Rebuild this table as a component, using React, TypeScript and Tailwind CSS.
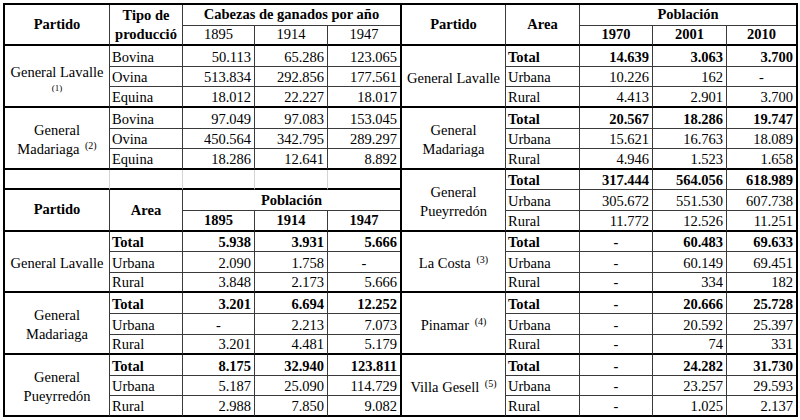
import React from "react";

type Row = { area: string; vals: string[] };
type Group = { name: React.ReactNode; rows: Row[] };

const sup = (n: number) => <sup className="text-[10px] ml-[2px]">({n})</sup>;

const ganado: Group[] = [
    {
        name: (
            <>
                <span>General Lavalle</span>
                <span className="text-[9px] leading-[12px]">(1)</span>
            </>
        ),
        rows: [
            { area: "Bovina", vals: ["50.113", "65.286", "123.065"] },
            { area: "Ovina", vals: ["513.834", "292.856", "177.561"] },
            { area: "Equina", vals: ["18.012", "22.227", "18.017"] },
        ],
    },
    {
        name: (
            <>
                <span>General</span>
                <span>Madariaga {sup(2)}</span>
            </>
        ),
        rows: [
            { area: "Bovina", vals: ["97.049", "97.083", "153.045"] },
            { area: "Ovina", vals: ["450.564", "342.795", "289.297"] },
            { area: "Equina", vals: ["18.286", "12.641", "8.892"] },
        ],
    },
];

const poblacionVieja: Group[] = [
    {
        name: <span>General Lavalle</span>,
        rows: [
            { area: "Total", vals: ["5.938", "3.931", "5.666"] },
            { area: "Urbana", vals: ["2.090", "1.758", "-"] },
            { area: "Rural", vals: ["3.848", "2.173", "5.666"] },
        ],
    },
    {
        name: (
            <>
                <span>General</span>
                <span>Madariaga</span>
            </>
        ),
        rows: [
            { area: "Total", vals: ["3.201", "6.694", "12.252"] },
            { area: "Urbana", vals: ["-", "2.213", "7.073"] },
            { area: "Rural", vals: ["3.201", "4.481", "5.179"] },
        ],
    },
    {
        name: (
            <>
                <span>General</span>
                <span>Pueyrredón</span>
            </>
        ),
        rows: [
            { area: "Total", vals: ["8.175", "32.940", "123.811"] },
            { area: "Urbana", vals: ["5.187", "25.090", "114.729"] },
            { area: "Rural", vals: ["2.988", "7.850", "9.082"] },
        ],
    },
];

const poblacionNueva: Group[] = [
    {
        name: <span>General Lavalle</span>,
        rows: [
            { area: "Total", vals: ["14.639", "3.063", "3.700"] },
            { area: "Urbana", vals: ["10.226", "162", "-"] },
            { area: "Rural", vals: ["4.413", "2.901", "3.700"] },
        ],
    },
    {
        name: (
            <>
                <span>General</span>
                <span>Madariaga</span>
            </>
        ),
        rows: [
            { area: "Total", vals: ["20.567", "18.286", "19.747"] },
            { area: "Urbana", vals: ["15.621", "16.763", "18.089"] },
            { area: "Rural", vals: ["4.946", "1.523", "1.658"] },
        ],
    },
    {
        name: (
            <>
                <span>General</span>
                <span>Pueyrredón</span>
            </>
        ),
        rows: [
            { area: "Total", vals: ["317.444", "564.056", "618.989"] },
            { area: "Urbana", vals: ["305.672", "551.530", "607.738"] },
            { area: "Rural", vals: ["11.772", "12.526", "11.251"] },
        ],
    },
    {
        name: <span>La Costa {sup(3)}</span>,
        rows: [
            { area: "Total", vals: ["-", "60.483", "69.633"] },
            { area: "Urbana", vals: ["-", "60.149", "69.451"] },
            { area: "Rural", vals: ["-", "334", "182"] },
        ],
    },
    {
        name: <span>Pinamar {sup(4)}</span>,
        rows: [
            { area: "Total", vals: ["-", "20.666", "25.728"] },
            { area: "Urbana", vals: ["-", "20.592", "25.397"] },
            { area: "Rural", vals: ["-", "74", "331"] },
        ],
    },
    {
        name: <span>Villa Gesell {sup(5)}</span>,
        rows: [
            { area: "Total", vals: ["-", "24.282", "31.730"] },
            { area: "Urbana", vals: ["-", "23.257", "29.593"] },
            { area: "Rural", vals: ["-", "1.025", "2.137"] },
        ],
    },
];

type CellProps = {
    children?: React.ReactNode;
    className?: string;
    last?: boolean;
    thick?: boolean;
    faint?: boolean;
};

// every cell draws its own right and bottom line; groups end on a heavy line
const Cell: React.FC<CellProps> = ({ children, className = "", last, thick, faint }) => {
    const right = last ? "" : faint ? "border-r border-r-[#d4d4d4]" : "border-r border-r-[#3a3a3a]";
    const bottom = thick ? "border-b-2 border-b-black" : "border-b border-b-[#3a3a3a]";
    return <div className={`flex min-w-0 overflow-hidden whitespace-nowrap ${right} ${bottom} ${className}`}>{children}</div>;
};

const Header: React.FC<{ title: string; second: React.ReactNode; years: string[]; boldYears: boolean }> = ({ title, second, years, boldYears }) => (
    <>
        <Cell thick className="row-span-2 items-center justify-center font-bold">Partido</Cell>
        <Cell thick className="row-span-2 flex-col items-center justify-around font-bold leading-none">{second}</Cell>
        <Cell last className="col-span-3 items-center justify-center font-bold">{title}</Cell>
        {years.map((y, i) => (
            <Cell key={y} thick last={i === 2} className={`items-end justify-center pb-[1px] ${boldYears ? "font-bold" : ""}`}>
                {y}
            </Cell>
        ))}
    </>
);

const Groups: React.FC<{ groups: Group[] }> = ({ groups }) => (
    <>
        {groups.map((g, gi) => (
            <React.Fragment key={gi}>
                <Cell thick className="row-span-3 flex-col items-center justify-center text-center leading-[19px] pt-[4px]">
                    {g.name}
                </Cell>
                {g.rows.map((r, ri) => {
                    const thick = ri === 2;
                    const bold = r.area === "Total" ? "font-bold" : "";
                    return (
                        <React.Fragment key={r.area}>
                            <Cell thick={thick} className={`items-end pl-[2px] ${bold}`}>{r.area}</Cell>
                            {r.vals.map((v, vi) => (
                                <Cell
                                    key={vi}
                                    thick={thick}
                                    last={vi === 2}
                                    className={`items-end ${v === "-" ? "justify-center" : "justify-end pr-[3px]"} ${bold}`}
                                >
                                    {v}
                                </Cell>
                            ))}
                        </React.Fragment>
                    );
                })}
            </React.Fragment>
        ))}
    </>
);

const App: React.FC = () => {
    return (
        <div className="w-[800px] h-[420px] bg-white pl-[3px] pt-[3px] flex font-['Liberation_Serif','Times_New_Roman',serif] text-[14.5px] leading-[17px] text-black">
            {/* left block: livestock table, spacer row and early population table */}
            <div className="w-[397px] h-[414px] box-border border-l-2 border-t-2 border-black grid grid-cols-[105px_73px_72px_73px_72px] grid-rows-[repeat(20,minmax(0,1fr))]">
                <Header
                    title="Cabezas de ganados por año"
                    second={
                        <>
                            <span>Tipo de</span>
                            <span>producció</span>
                        </>
                    }
                    years={["1895", "1914", "1947"]}
                    boldYears={false}
                />
                <Groups groups={ganado} />
                <Cell thick faint />
                <Cell thick faint />
                <Cell thick faint />
                <Cell thick faint />
                <Cell thick last />
                <Header title="Población" second={<span>Area</span>} years={["1895", "1914", "1947"]} boldYears />
                <Groups groups={poblacionVieja} />
            </div>

            {/* right block: recent population */}
            <div className="w-[398px] h-[414px] box-border border-x-2 border-t-2 border-black grid grid-cols-[104px_74px_73px_74px_69px] grid-rows-[repeat(20,minmax(0,1fr))]">
                <Header title="Población" second={<span>Area</span>} years={["1970", "2001", "2010"]} boldYears />
                <Groups groups={poblacionNueva} />
            </div>
        </div>
    );
};

export default App;
